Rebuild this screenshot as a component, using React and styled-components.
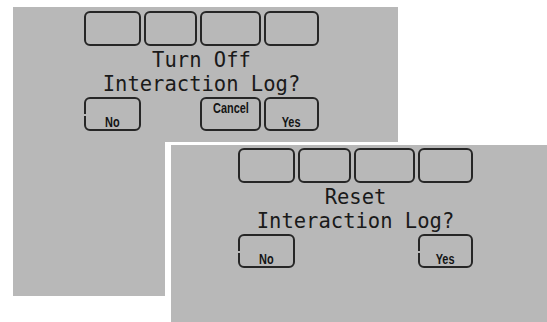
import React from "react";
import styled, { createGlobalStyle, css } from "styled-components";

const GlobalStyle = createGlobalStyle`
  html, body { margin: 0; padding: 0; background: #ffffff; }
  #root { width: 547px; height: 322px; }
`;

const Page = styled.div`
  position: relative;
  width: 547px;
  height: 322px;
  overflow: hidden;
  box-sizing: border-box;
  padding: 7px 0 0 13px;
  background: #ffffff;
`;

const Frame = styled.div`
  position: absolute;
  left: 165px;
  top: 142px;
  padding: 3px 0 0 6px;
  background: #ffffff;
`;

const Screen = styled.div`
  width: 385px;
  height: 289px;
  box-sizing: border-box;
  background: #b8b8b8;
  padding: ${(p) => p.$top}px 0 0 ${(p) => p.$left}px;
`;

const Content = styled.div`
  width: 235px;
  display: flex;
  flex-direction: column;
  align-items: center;
`;

const ButtonRow = styled.div`
  display: grid;
  grid-template-columns: 57px 53px 61px 55px;
  column-gap: 3px;
  width: 235px;
`;

const Key = styled.div`
  position: relative;
  box-sizing: border-box;
  height: ${(p) => p.$h}px;
  border: 2px solid #262626;
  border-radius: 6px;
  display: flex;
  justify-content: center;
  align-items: ${(p) => (p.$labelPos === "top" ? "flex-start" : "flex-end")};
  padding-top: ${(p) => (p.$labelPos === "top" ? 2 : 0)}px;
  grid-column: ${(p) => p.$col};
  ${(p) =>
    p.$notch &&
    css`
      &::before {
        content: "";
        position: absolute;
        left: -2px;
        top: 15px;
        width: 2px;
        height: 2px;
        background: #b8b8b8;
      }
    `}
`;

const KeyLabel = styled.span`
  display: inline-block;
  font-family: "Liberation Sans", Arial, sans-serif;
  font-weight: 700;
  font-size: 14px;
  line-height: 14px;
  color: #141414;
  transform: scaleX(0.78);
  transform-origin: center;
`;

const Message = styled.div`
  margin: 2px 0 1px;
  height: 48px;
  font-family: "DejaVu Sans Mono", "Liberation Mono", monospace;
  font-size: 20.5px;
  line-height: 24px;
  color: #1a1a1a;
  text-align: center;
  white-space: nowrap;
`;

function Panel({ top, left, title, bottomKeys }) {
  return (
    <Screen $top={top} $left={left}>
      <Content>
        <ButtonRow>
          {[1, 2, 3, 4].map((c) => (
            <Key key={c} $h={35} $col={c} />
          ))}
        </ButtonRow>
        <Message>
          {title}
          <br />
          Interaction Log?
        </Message>
        <ButtonRow>
          {bottomKeys.map((k) => (
            <Key key={k.label} $h={34} $col={k.col} $labelPos={k.pos} $notch={k.notch}>
              <KeyLabel>{k.label}</KeyLabel>
            </Key>
          ))}
        </ButtonRow>
      </Content>
    </Screen>
  );
}

export default function App() {
  return (
    <>
      <GlobalStyle />
      <Page>
        <Panel
          top={4}
          left={71}
          title="Turn Off"
          bottomKeys={[
            { label: "No", col: 1, pos: "bottom", notch: true },
            { label: "Cancel", col: 3, pos: "top" },
            { label: "Yes", col: 4, pos: "bottom" },
          ]}
        />
        <Frame>
          <Panel
            top={3}
            left={67}
            title="Reset"
            bottomKeys={[
              { label: "No", col: 1, pos: "bottom", notch: true },
              { label: "Yes", col: 4, pos: "bottom", notch: true },
            ]}
          />
        </Frame>
      </Page>
    </>
  );
}
